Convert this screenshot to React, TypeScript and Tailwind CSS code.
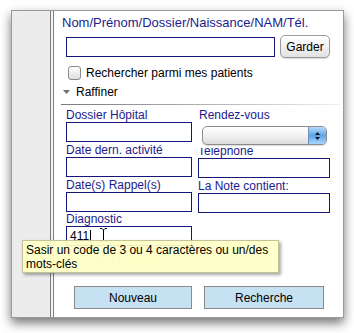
import React from "react";

const font = { fontFamily: '"Liberation Sans", Arial, sans-serif' };

function Input({ w, className = "" }: { w: string; className?: string }) {
  return <div className={`${w} h-[20px] border border-[#16167a] bg-white ${className}`} />;
}

function Label({ children, className = "" }: { children: React.ReactNode; className?: string }) {
  return <div className={`h-[14px] leading-[14px] text-[12px] text-[#1c1c8c] whitespace-nowrap ${className}`}>{children}</div>;
}

export default function App() {
  return (
    <div className="w-[354px] h-[333px] bg-white overflow-hidden pl-[11px] pt-[10px] relative" style={font}>
      <div className="w-[333px] h-[308px] border border-[#9a9a9a] bg-white flex shadow-[0_5px_10px_rgba(0,0,0,0.55)]">
        {/* sidebar */}
        <div className="w-[39px] h-full bg-[#ececec] border-r border-[#7d7d7d]" />
        <div className="w-[2px] h-full bg-[#f4f4f4]" />
        {/* content */}
        <div className="flex-1 h-full border-l border-[#5f7fcf] bg-white flex flex-col pl-[8px] pt-[5px]">
          <div className="h-[14px] leading-[14px] text-[13px] text-[#1c1c8c] whitespace-nowrap">Nom/Prénom/Dossier/Naissance/NAM/Tél.</div>
          <div className="flex items-center mt-[5px] h-[23px]">
            <Input w="w-[209px]" className="ml-[4px]" />
            <div className="ml-[5px] w-[50px] h-[23px] rounded-[5px] border border-[#9a9a9a] bg-gradient-to-b from-white to-[#e2e2e2] shadow-[0_1px_1px_rgba(0,0,0,0.15)] flex items-center justify-center text-[12px] text-black">
              Garder
            </div>
          </div>
          <div className="flex items-center mt-[8px] h-[14px]">
            <div className="ml-[6px] w-[13px] h-[14px] rounded-[3px] border border-[#8a8a8a] bg-gradient-to-b from-white to-[#dedede]" />
            <span className="ml-[5px] text-[12px] leading-[14px] text-black">Rechercher parmi mes patients</span>
          </div>
          <div className="flex items-center mt-[5px] h-[14px]">
            <svg width="7" height="4" viewBox="0 0 7 4" className="ml-[1px]">
              <path d="M0 0 L7 0 L3.5 4 Z" fill="#707070" />
            </svg>
            <span className="ml-[6px] text-[12px] leading-[14px] text-black">Raffiner</span>
          </div>
          <div className="mt-[5px] ml-[-1px] w-[280px] h-[1px] bg-gradient-to-r from-[#7a7a7a] via-[#b0b0b0] to-[#f0f0f0]" />
          <div className="mt-[3px] ml-[4px] flex gap-[6px]">
            <div className="w-[126px] flex flex-col">
              <Label>Dossier Hôpital</Label>
              <Input w="w-[126px]" />
              <Label className="mt-[1px]">Date dern. activité</Label>
              <Input w="w-[126px]" />
              <Label className="mt-[1px]">Date(s) Rappel(s)</Label>
              <Input w="w-[126px]" />
              <Label>Diagnostic</Label>
              <div className="w-[126px] h-[20px] border border-[#16167a] bg-white flex items-center pl-[3px] text-[12px] text-black relative">
                <span>411</span>
                <span className="ml-[1px] w-[1px] h-[13px] bg-black" />
                <svg width="9" height="16" viewBox="0 0 9 16" className="absolute left-[32px] top-[0px]">
                  <path d="M1 1.5 H3 L4.5 3 L6 1.5 H8 M4.5 3 V13 M1 14.5 H3 L4.5 13 L6 14.5 H8" stroke="white" strokeWidth="3" fill="none" />
                  <path d="M1 1.5 H3 L4.5 3 L6 1.5 H8 M4.5 3 V13 M1 14.5 H3 L4.5 13 L6 14.5 H8" stroke="black" strokeWidth="1" fill="none" />
                </svg>
              </div>
            </div>
            <div className="w-[132px] flex flex-col">
              <Label className="pl-[1px]">Rendez-vous</Label>
              <div className="mt-[4px] ml-[4px] w-[125px] h-[19px] rounded-[5px] border border-[#8c8c8c] bg-gradient-to-b from-white via-[#f2f2f2] to-[#dcdcdc] flex justify-end overflow-hidden shadow-[0_1px_1px_rgba(0,0,0,0.15)]">
                <div className="w-[18px] h-full bg-gradient-to-b from-[#b9dbf7] via-[#5aa6ec] to-[#a8d6fb] border-l border-[#6c8fb8] flex flex-col items-center justify-center gap-[2px]">
                  <svg width="5" height="3" viewBox="0 0 5 3"><path d="M0 3 L2.5 0 L5 3 Z" fill="#111" /></svg>
                  <svg width="5" height="3" viewBox="0 0 5 3"><path d="M0 0 L2.5 3 L5 0 Z" fill="#111" /></svg>
                </div>
              </div>
              <div className="mt-[3px] h-[10px] overflow-hidden flex items-end">
                <Label>Telephone</Label>
              </div>
              <Input w="w-[132px]" />
              <Label className="mt-[1px]">La Note contient:</Label>
              <Input w="w-[132px]" />
            </div>
          </div>
          <div className="mt-[8px] ml-[26px] h-[14px] leading-[14px] text-[12px] text-[#c4c4c4]">Afficher tous</div>
          <div className="mt-[18px] ml-[12px] flex gap-[12px]">
            <div className="w-[118px] h-[23px] border border-[#8a8a8a] bg-[#c6e2f2] flex items-center justify-center text-[12px] text-black">Nouveau</div>
            <div className="w-[120px] h-[23px] border border-[#8a8a8a] bg-[#c6e2f2] flex items-center justify-center text-[12px] text-black">Recherche</div>
          </div>
        </div>
      </div>
      {/* tooltip */}
      <div className="absolute left-[22px] top-[240px] w-[257px] h-[33px] border border-[#c4c29a] bg-[rgba(255,255,196,0.92)] shadow-[2px_2px_3px_rgba(0,0,0,0.35)] pl-[3px] pt-[2px] text-[12px] leading-[14px] text-black">
        <div>Sasir un code de 3 ou 4 caractères ou un/des</div>
        <div>mots-clés</div>
      </div>
    </div>
  );
}
